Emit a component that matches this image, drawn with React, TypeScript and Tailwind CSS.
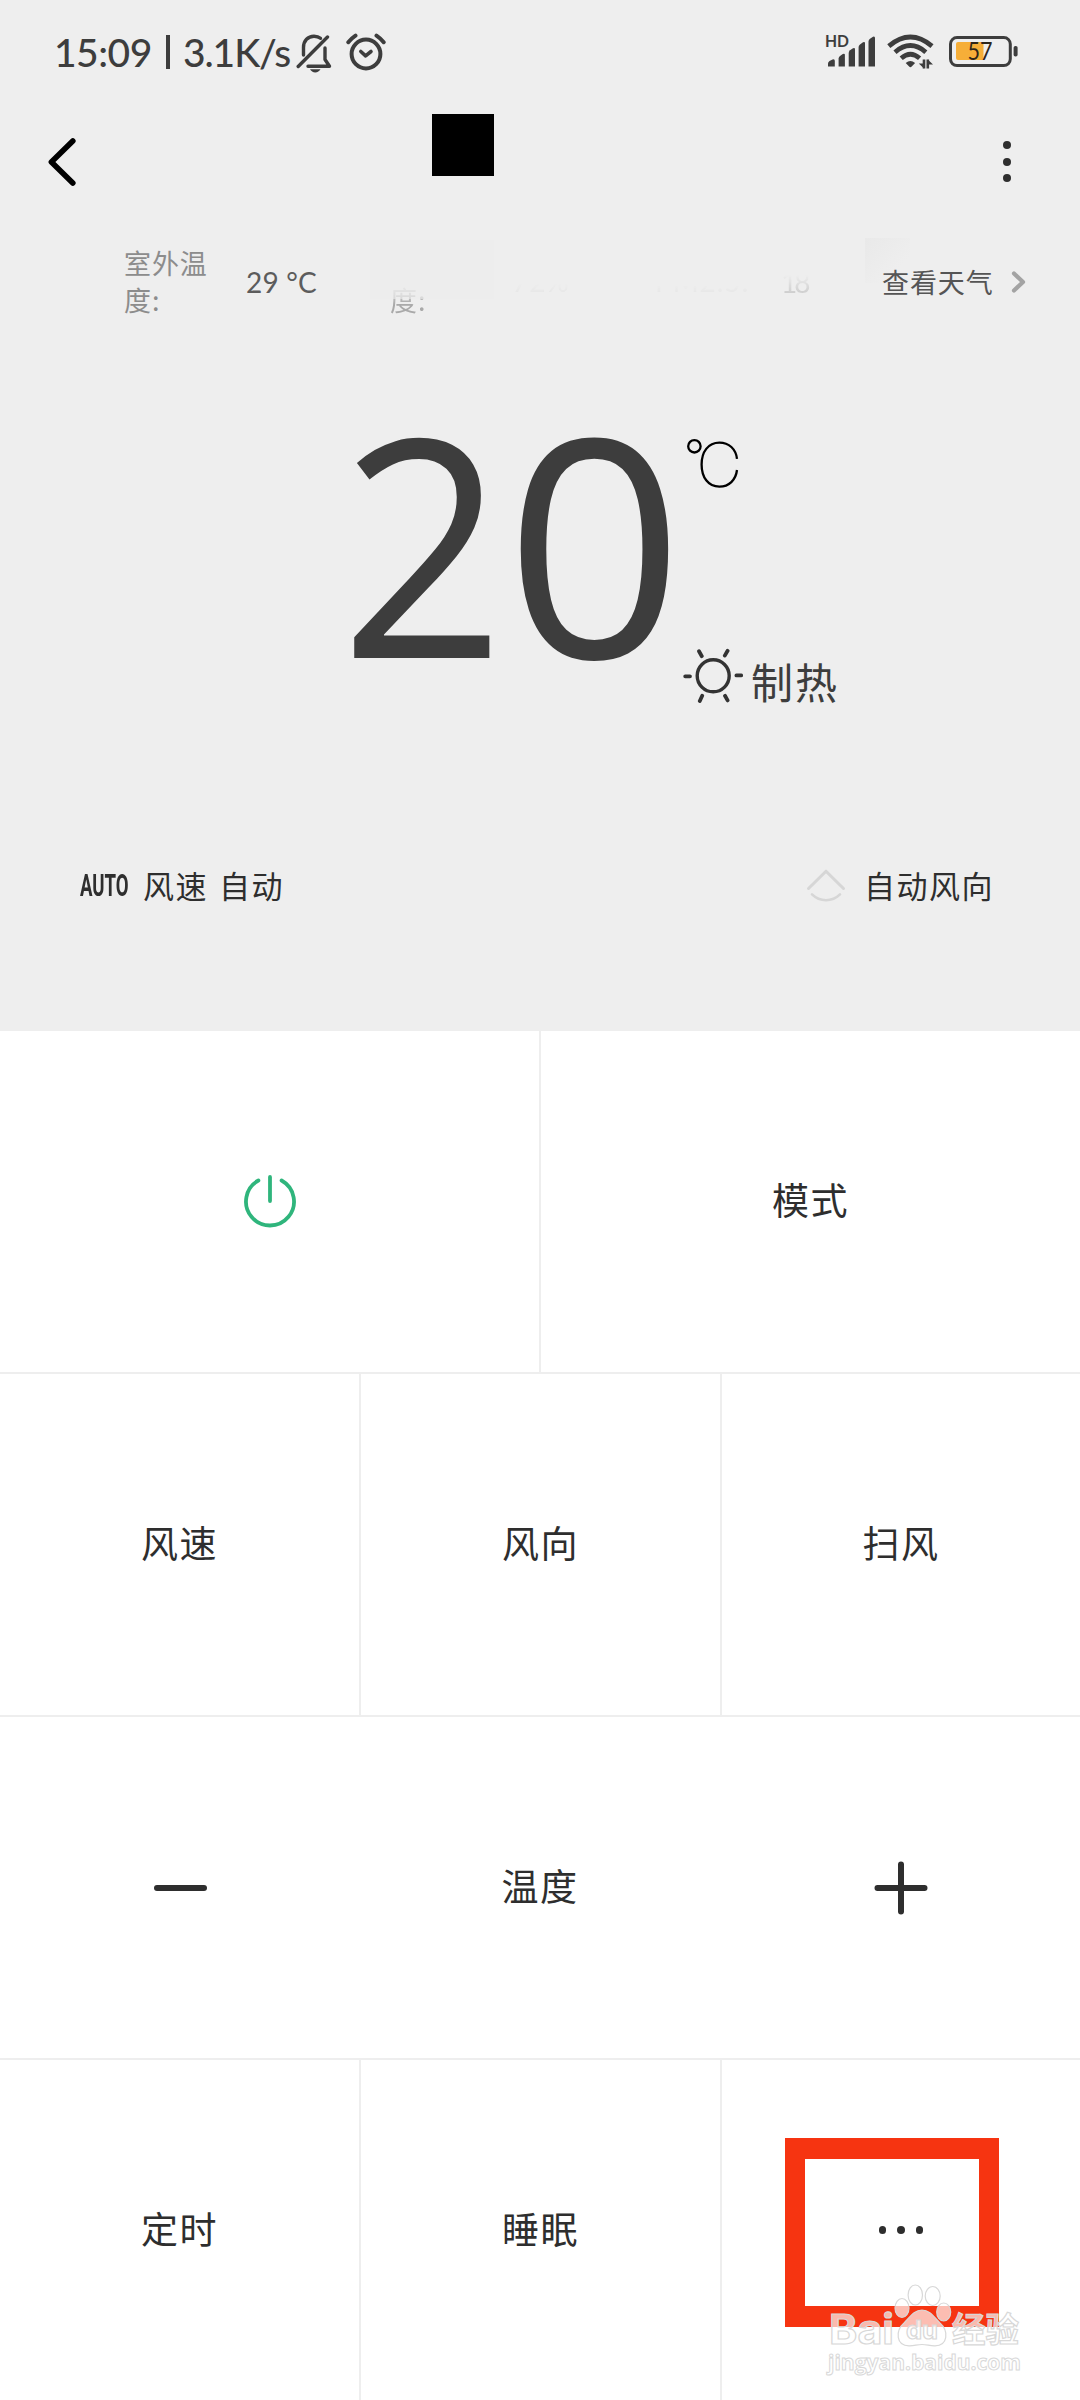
import React from "react";

const CJK = "font-['Noto_Sans_CJK_SC',sans-serif]";

function BellOffIcon() {
  return (
    <svg width="36" height="40" viewBox="0 0 36 40" fill="none" stroke="#3d3d3d" strokeWidth="3.4" strokeLinecap="round">
      <path d="M7.5 22V14.5C7.5 7.5 12 3.2 18 3.2C20.5 3.2 23 4 24.5 5.3" />
      <path d="M2.2 33.5L31.5 4" />
      <path d="M12 33.3H33.5L29 26.5V15" strokeLinejoin="round" />
      <path d="M14 36.2H24.5C23.5 38.2 21.5 39.4 19.2 39.4C17 39.4 15 38.2 14 36.2Z" fill="#3d3d3d" stroke="none" />
    </svg>
  );
}

function AlarmIcon() {
  return (
    <svg width="40" height="38" viewBox="0 0 40 38" fill="none" stroke="#3d3d3d" strokeLinecap="round" strokeLinejoin="round">
      <circle cx="20" cy="21" r="14.4" strokeWidth="4" />
      <path d="M14.8 18.5L19.6 22.8L25 18.5" strokeWidth="3.6" />
      <path d="M2.3 9.2C4.5 6.5 6.5 4.6 9.5 2.6M37.7 9.2C35.5 6.5 33.5 4.6 30.5 2.6" strokeWidth="4" />
    </svg>
  );
}

function SignalIcon() {
  return (
    <svg className="overflow-visible" width="52" height="36" viewBox="0 0 52 36" fill="#3d3d3d">
      <text x="0" y="12.6" fontFamily="Lato, sans-serif" fontWeight="700" fontSize="17" textLength="24" lengthAdjust="spacingAndGlyphs">HD</text>
      <path d="M3 29.5Q3 28 4.5 27L7.5 25.4Q9.8 24.6 9.8 27V32.4H3Z" />
      <path d="M13.6 24.5Q13.6 23 15 22L17.8 20Q19.9 19 19.9 21V32.4H13.6Z" />
      <path d="M23.7 19Q23.7 17.3 25 16.3L28 14.2Q30 13.2 30 15.3V32.4H23.7Z" />
      <path d="M33.6 13Q33.6 11.4 35 10.4L38 8.2Q40 7.2 40 9.3V32.4H33.6Z" />
      <path d="M43.5 7.5Q43.5 5.8 45 4.8L48 2.7Q50 1.8 50 4V32.4H43.5Z" />
    </svg>
  );
}

function WifiIcon() {
  return (
    <svg width="48" height="36" viewBox="0 0 48 36" fill="none" stroke="#3d3d3d" strokeWidth="4.8">
      <path d="M1.8 12.2Q23.4 -6 45 12.2" />
      <path d="M8 18.2Q23.4 5 38.8 18.2" />
      <path d="M14.2 24.3Q23.4 16.3 32.6 24.3" />
      <path d="M18.7 29Q23.4 25.2 28.1 29L24.7 32.6Q23.4 34 22.1 32.6Z" fill="#3d3d3d" stroke="none" />
      <path d="M37 25.5V34.6M40.8 34.6V25.5" strokeWidth="2.6" />
      <path d="M37 34.600L31.800 29.500H37ZM40.800 25.500L46 30.500H40.800Z" fill="#3d3d3d" stroke="none" />
    </svg>
  );
}

function BatteryIcon() {
  return (
    <svg width="70" height="32" viewBox="0 0 70 32">
      <rect x="1.5" y="1.6" width="59.8" height="28" rx="6.5" fill="none" stroke="#3d3d3d" strokeWidth="3" />
      <path d="M9 6H34.5V24H9Q7 24 7 22V8Q7 6 9 6Z" fill="#f6ae38" />
      <rect x="64.6" y="10" width="4" height="10.5" rx="1.8" fill="#3d3d3d" />
      <text x="18.5" y="24.3" fontFamily="Lato, sans-serif" fontSize="25" fill="#2e2519" textLength="25" lengthAdjust="spacingAndGlyphs">57</text>
    </svg>
  );
}

function StatusBar() {
  return (
    <div className="flex h-[104px] items-center justify-between pl-[54px] pr-[61px]">
      <div className="flex items-center">
        <div className="flex w-[237px] items-center whitespace-nowrap font-[Lato] text-[39px] font-medium leading-[48px] text-[#3d3d3d]">
          <span className="w-[112px] tracking-[-0.5px]">15:09</span>
          <span className="mt-[-1px] h-[34px] w-[4px] bg-[#3d3d3d]" />
          <span className="ml-[13px] tracking-[-1.1px]">3.1K/s</span>
        </div>
        <div className="ml-[5px] mt-[2px]"><BellOffIcon /></div>
        <div className="ml-[14px]"><AlarmIcon /></div>
      </div>
      <div className="flex items-center">
        <SignalIcon />
        <div className="ml-[10px] mr-[14px]"><WifiIcon /></div>
        <div><BatteryIcon /></div>
      </div>
    </div>
  );
}

function NavBar() {
  return (
    <div className="flex h-[116px] items-start justify-between pl-[48px] pr-[69px]">
      <div className="flex items-start">
        <svg className="mt-[33px]" width="30" height="50" viewBox="0 0 30 50" fill="none" stroke="#000" strokeWidth="5.6" strokeLinecap="round" strokeLinejoin="round">
          <path d="M24.8 4L3.4 25L24.8 46" />
        </svg>
        <div className="ml-[354px] mt-[10px] h-[62px] w-[62px] bg-black" />
      </div>
      <div className="mt-[37px] flex flex-col gap-[8.6px]">
        <span className="size-[8px] rounded-full bg-[#2e2e2e]" />
        <span className="size-[8px] rounded-full bg-[#2e2e2e]" />
        <span className="size-[8px] rounded-full bg-[#2e2e2e]" />
      </div>
    </div>
  );
}

function WeatherRow() {
  return (
    <div className="relative flex h-[122px] items-center pl-[124px] text-[27px] leading-[37px] tracking-[0.9px] text-[#8c8c8c]">
      <div className="w-[122px]">室外温<br />度:</div>
      <div className="mt-[2px] w-[144px] font-[Lato] text-[28px] tracking-[0.2px] text-[#5c5c5c]">29 °C</div>
      <div className="w-[122px] pt-[37px] opacity-70 [mask-image:linear-gradient(to_bottom,transparent_50%,black_82%)]">度:</div>
      <div className="w-[143px] font-[Lato] text-[28px] opacity-10 [mask-image:linear-gradient(to_bottom,transparent_55%,black_90%)]">72%</div>
      <div className="w-[126px] font-[Lato] text-[28px] opacity-10 [mask-image:linear-gradient(to_bottom,transparent_60%,black_90%)]">PM2.5:</div>
      <div className="mt-[2px] w-[101px] font-[Lato] text-[28px] tracking-[-3px] opacity-40 [mask-image:linear-gradient(to_bottom,transparent_30%,black_90%)]">18</div>
      <div className="whitespace-nowrap text-[#555]">查看天气</div>
      <svg className="ml-[17px] mt-[1px]" width="16" height="24" viewBox="0 0 16 24" fill="none" stroke="#a3a3a3" strokeWidth="4.2" strokeLinecap="round" strokeLinejoin="round">
        <path d="M3 3.5L12 12L3 20.5" />
      </svg>
      <div className="absolute left-[370px] top-[20px] h-[59px] w-[124px] bg-[#ededed]/60" />
      <div className="absolute left-[865px] top-[18px] h-[45px] w-[45px] bg-linear-to-br from-[#e9e9e9] to-[#eeeeee]/0 to-70%" />
    </div>
  );
}

function SunIcon() {
  return (
    <svg width="60" height="56" viewBox="0 0 60 56" fill="none" stroke="#333" strokeLinecap="round">
      <circle cx="30.2" cy="27.8" r="16" strokeWidth="3.4" />
      <path d="M2.2 28.3H7M53.4 27.4H58.2M16 3.2L18.8 8.2M44.6 2.8L41.8 7.6M19.2 47.8L16.8 53M42 47.8L44.6 52.4" strokeWidth="3.8" />
    </svg>
  );
}

function Temperature() {
  return (
    <div className="flex h-[454px] pl-[340px]">
      <div className="h-[400px] w-[344px]">
        <div className="flex whitespace-nowrap font-['Open_Sans'] text-[304px] leading-[396px] text-[#3d3d3d]">
          <span className="w-[165px] origin-left scale-x-[0.95]">2</span>
          <span className="origin-left scale-x-[1.03]">0</span>
        </div>
      </div>
      <div className="flex flex-col">
        <svg className="ml-[2px] mt-[95px]" width="56" height="54" viewBox="0 0 56 54" fill="none" stroke="#000" strokeWidth="2.3">
          <circle cx="8.4" cy="9.3" r="6.2" />
          <path d="M51 21.8C49.8 12 43 5.6 33.4 5.6C22 5.6 15.6 15 15.6 27.5C15.6 40.2 22 49.6 33.4 49.6C43 49.6 49.8 43 51 33" />
        </svg>
        <div className="ml-[-1px] mt-[157px] flex items-start">
          <SunIcon />
          <span className="ml-[8px] mt-[3px] whitespace-nowrap text-[42px] leading-[60px] tracking-[2px] text-[#3d3d3d]">制热</span>
        </div>
      </div>
    </div>
  );
}

function StateRow() {
  return (
    <div className="flex h-[174px] items-center justify-between pl-[80px] pr-[86px] pt-[3px] text-[31px] leading-[44px] tracking-[1.5px] text-[#2e2e2e]">
      <div className="flex items-center">
        <div className="w-[48px]">
          <span className="inline-block origin-left scale-x-[0.6] font-[Roboto] text-[31px] font-bold leading-[44px] tracking-[0px]">AUTO</span>
        </div>
        <span className="ml-[15px]">风速</span>
        <span className="ml-[11px]">自动</span>
      </div>
      <div className="flex items-center">
        <svg width="40" height="34" viewBox="0 0 40 34" fill="none" stroke="#d6d6d6" strokeWidth="3" strokeLinecap="round" strokeLinejoin="round">
          <path d="M2.5 20.5L20 3.2L37.500 20.5" />
          <path d="M6 26.4Q12 32.200 20 32.200Q28 32.200 34 26.4" strokeWidth="2.600" />
        </svg>
        <span className="ml-[18px]">自动风向</span>
      </div>
    </div>
  );
}

function Cell({ children, divider = false, label = "" }: { children?: React.ReactNode; divider?: boolean; label?: string }) {
  return (
    <div className={divider ? "flex flex-1 items-center justify-center border-l-2 border-[#eeeeee]" : "flex flex-1 items-center justify-center"}>
      {children ?? <span className="mt-[-5px] text-[37px] leading-[50px] tracking-[1.500px] text-[#2e2e2e]">{label}</span>}
    </div>
  );
}

function PowerIcon() {
  return (
    <svg className="mt-[-1px]" width="54" height="54" viewBox="0 0 54 54" fill="none" stroke="#2fb57c" strokeWidth="3.8" strokeLinecap="round">
      <path d="M15.400 6.500A24 24 0 1 0 38.600 6.500" />
      <path d="M27 3V27" />
    </svg>
  );
}

function Watermark() {
  return (
    <svg className="absolute left-[816px] top-[2276px]" width="220" height="112" viewBox="0 0 220 112" fill="#fff" fillOpacity="0.68" stroke="#d8d8d8" strokeWidth="1.200" fontFamily="Inter, sans-serif" fontWeight="700">
      <ellipse cx="86" cy="32" rx="7" ry="9.500" />
      <ellipse cx="99.300" cy="19" rx="7.200" ry="10" />
      <ellipse cx="116.700" cy="20" rx="7.500" ry="9.500" />
      <ellipse cx="127.700" cy="36" rx="7" ry="9" />
      <path d="M106 34C114 34 118 41 124 47C133 55 132 69.500 119 69.800C114 70 111 68.500 106 68.500C101 68.500 98 70 93 69.800C80 69.500 79 55 88 47C94 41 98 34 106 34Z" />
      <text x="13" y="68" fontSize="41" textLength="65" lengthAdjust="spacingAndGlyphs">Bai</text>
      <text x="90" y="63" fontSize="25" textLength="32" lengthAdjust="spacingAndGlyphs">du</text>
      <text x="136" y="66" fontSize="34" fontFamily="'Noto Sans CJK SC', sans-serif" textLength="67" lengthAdjust="spacingAndGlyphs">经验</text>
      <text x="12" y="94" fontSize="21" strokeWidth="1" fontFamily="'Open Sans', sans-serif" textLength="193" lengthAdjust="spacingAndGlyphs">jingyan.baidu.com</text>
    </svg>
  );
}

export default function App() {
  return (
    <div className={"relative flex h-[2400px] w-[1080px] flex-col overflow-hidden bg-white " + CJK}>
      <header className="h-[1031px] shrink-0 bg-[#eeeeee]">
        <StatusBar />
        <NavBar />
        <WeatherRow />
        <Temperature />
        <StateRow />
      </header>
      <main className="flex flex-1 flex-col">
        <div className="flex h-[343px] border-b-2 border-[#eeeeee]">
          <Cell><PowerIcon /></Cell>
          <Cell divider label="模式" />
        </div>
        <div className="grid h-[343px] grid-cols-[359px_361px_360px] border-b-2 border-[#eeeeee]">
          <Cell label="风速" />
          <Cell divider label="风向" />
          <Cell divider label="扫风" />
        </div>
        <div className="grid h-[343px] grid-cols-[360px_360px_360px] border-b-2 border-[#eeeeee]">
          <Cell><span className="ml-[1px] h-[6px] w-[53px] rounded-full bg-[#2e2e2e]" /></Cell>
          <Cell label="温度" />
          <Cell>
            <svg className="ml-[2px]" width="54" height="54" viewBox="0 0 54 54" stroke="#2e2e2e" strokeWidth="6" strokeLinecap="round">
              <path d="M3.500 27H50.500M27 3.500V50.500" />
            </svg>
          </Cell>
        </div>
        <div className="grid h-[340px] grid-cols-[359px_361px_360px]">
          <Cell label="定时" />
          <Cell divider label="睡眠" />
          <Cell divider>
            <div className="flex gap-[11px]">
              <span className="size-[7.500px] rounded-full bg-[#2e2e2e]" />
              <span className="size-[7.500px] rounded-full bg-[#2e2e2e]" />
              <span className="size-[7.500px] rounded-full bg-[#2e2e2e]" />
            </div>
          </Cell>
        </div>
      </main>
      <div className="absolute left-[785px] top-[2138px] h-[189px] w-[214px] border-x-[20px] border-y-[21px] border-[#f63411]" />
      <Watermark />
    </div>
  );
}
